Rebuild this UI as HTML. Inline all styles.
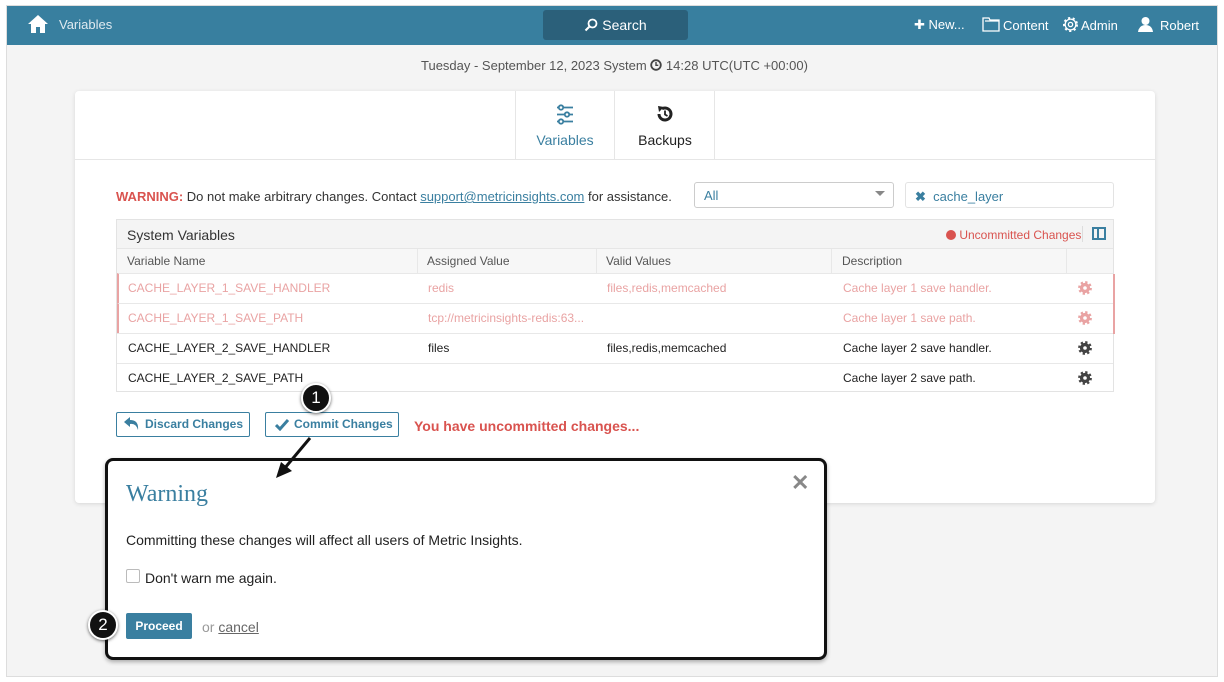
<!DOCTYPE html>
<html><head><meta charset="utf-8"><style>
*{box-sizing:border-box;margin:0;padding:0}
body{width:1224px;height:682px;background:#fff;font-family:"Liberation Sans",sans-serif;position:relative;overflow:hidden}
.frame{position:absolute;left:6px;top:5px;width:1212px;height:672px;background:#f4f4f4;border:1px solid #ddd}
.hdr{position:absolute;left:7px;top:6px;width:1210px;height:39px;background:#387f9f;color:#fff;font-size:13px}
.hdr span,.hdr div{position:absolute}
.search{left:536px;top:4px;width:145px;height:30px;background:#2b607a;border-radius:3px;text-align:center;line-height:30px;font-size:14px}
.a{position:absolute}
.card{position:absolute;left:75px;top:91px;width:1080px;height:412px;background:#fff;border-radius:4px;box-shadow:0 1px 4px rgba(0,0,0,.12)}
.tbl{position:absolute;left:116px;top:219px;width:998px;border:1px solid #e3e3e3;font-size:12px}
.row{position:absolute;left:0;width:996px;height:30px;border-top:1px solid #e8e8e8;line-height:29px}
.row span{position:absolute;white-space:nowrap}
.row svg{position:absolute;left:959px;top:7px}
.pink{color:#e9a3a3}
.btn{position:absolute;top:412px;height:25px;border:1px solid #3a7fa0;border-radius:2px;background:#fff;color:#3a7fa0;font-weight:bold;font-size:12px;line-height:23px;padding-left:28px}
.circ{position:absolute;width:30px;height:30px;border-radius:50%;background:#111;color:#fff;border:2px solid #fff;box-shadow:0 1px 3px rgba(0,0,0,.6);text-align:center;line-height:26px;font-size:17px}
</style></head><body>
<svg width="0" height="0" style="position:absolute"><defs><g id="gear"><circle cx="7" cy="7" r="4.6"/><circle cx="7" cy="7" r="5.6" fill="none" stroke-width="2.6" stroke-dasharray="2.2 2.2"/></g></defs></svg>
<div class="frame"></div>
<div class="hdr">
 <svg class="a" style="left:20px;top:8px" width="22" height="20" viewBox="0 0 22 20"><path d="M11 1 L1 10 L4 10 L4 19 L9 19 L9 13 L13 13 L13 19 L18 19 L18 10 L21 10 Z" fill="#fff"/></svg>
 <span style="left:52px;top:11px;color:#dfeaf0">Variables</span>
 <div class="search"><svg style="vertical-align:-2px" width="14" height="14" viewBox="0 0 14 14"><circle cx="8.5" cy="5.5" r="4" fill="none" stroke="#fff" stroke-width="1.8"/><path d="M5.5 8.5 L1.5 12.5" stroke="#fff" stroke-width="2"/></svg> Search</div>
 <span style="left:907px;top:11px">✚ New...</span>
 <svg class="a" style="left:975px;top:11px" width="18" height="15" viewBox="0 0 18 15"><path d="M1 1h6l1 2h9v11H1z M3 4h14" fill="none" stroke="#fff" stroke-width="1.3"/></svg>
 <span style="left:996px;top:12px">Content</span>
 <svg class="a" style="left:1056px;top:11px" width="15" height="15" viewBox="0 0 14 14"><circle cx="7" cy="7" r="5" fill="none" stroke="#fff" stroke-width="1.2"/><circle cx="7" cy="7" r="6" fill="none" stroke="#fff" stroke-width="2" stroke-dasharray="2 2.3"/><circle cx="7" cy="7" r="2" fill="none" stroke="#fff" stroke-width="1.2"/></svg>
 <span style="left:1074px;top:12px">Admin</span>
 <svg class="a" style="left:1131px;top:10px" width="15" height="16" viewBox="0 0 15 16"><circle cx="7.5" cy="5" r="4" fill="#fff"/><path d="M0 16 Q1 9 7.5 9 Q14 9 15 16Z" fill="#fff"/></svg>
 <span style="left:1153px;top:12px">Robert</span>
</div>
<div class="a" style="left:421px;top:58px;font-size:13px;color:#555">Tuesday - September 12, 2023 System <svg width="12" height="12" viewBox="0 0 12 12" style="vertical-align:-1px"><circle cx="6" cy="6" r="4.8" fill="none" stroke="#444" stroke-width="1.8"/><path d="M6 3V6.3H8.3" fill="none" stroke="#444" stroke-width="1.4"/></svg> 14:28 UTC(UTC +00:00)</div>
<div class="card">
 <div class="a" style="left:0;top:68px;width:1080px;height:1px;background:#e6e6e6"></div>
 <div class="a" style="left:440px;top:0;width:1px;height:68px;background:#e6e6e6"></div>
 <div class="a" style="left:539px;top:0;width:1px;height:68px;background:#e6e6e6"></div>
 <div class="a" style="left:639px;top:0;width:1px;height:68px;background:#e6e6e6"></div>
 <svg class="a" style="left:481px;top:13px" width="18" height="22" viewBox="0 0 18 22" fill="none" stroke="#3a7fa0" stroke-width="1.8"><circle cx="5" cy="3.5" r="2.2"/><path d="M8 3.5h9M1 3.5h1.5"/><circle cx="11" cy="10.5" r="2.2"/><path d="M1 10.5h7.5M13.5 10.5H17"/><circle cx="5" cy="17.5" r="2.2"/><path d="M8 17.5h9M1 17.5h1.5"/></svg>
 <div class="a" style="left:440px;top:41px;width:100px;text-align:center;font-size:14px;color:#3a7fa0">Variables</div>
 <svg class="a" style="left:581px;top:14px" width="18" height="18" viewBox="0 0 18 18"><path d="M3 9 A6 6 0 1 0 6 3.8" fill="none" stroke="#222" stroke-width="3"/><path d="M2 1 L8 2 L3 7Z" fill="#222"/><path d="M9 5.5V9.5L11.5 11" fill="none" stroke="#222" stroke-width="1.8"/></svg>
 <div class="a" style="left:540px;top:41px;width:100px;text-align:center;font-size:14px;color:#222">Backups</div>
</div>
<div class="a" style="left:116px;top:189px;font-size:13px;color:#333"><b style="color:#d9534f">WARNING:</b> Do not make arbitrary changes. Contact <u style="color:#3a7fa0">support@metricinsights.com</u> for assistance.</div>
<div class="a" style="left:694px;top:182px;width:200px;height:26px;border:1px solid #ccc;border-radius:3px;background:#fff;font-size:13px;color:#3a7fa0;padding:5px 9px">All<span style="position:absolute;right:8px;top:8px;width:0;height:0;border-left:5px solid transparent;border-right:5px solid transparent;border-top:5px solid #888"></span></div>
<div class="a" style="left:905px;top:182px;width:209px;height:26px;border:1px solid #e3e3e3;border-radius:3px;background:#fff;font-size:13px;color:#3a7fa0;padding:6px 9px"><b>✖</b>&nbsp; cache_layer</div>
<div class="tbl" style="height:173px">
 <div class="a" style="left:0;top:0;width:996px;height:28px;background:#f4f4f4;font-size:14px;color:#333;padding:7px 10px">System Variables</div>
 <div class="a" style="left:829px;top:8px;font-size:12px;color:#d9534f"><span style="display:inline-block;width:10px;height:10px;border-radius:50%;background:#d9534f;vertical-align:-1px"></span> Uncommitted Changes</div>
 <div class="a" style="left:965px;top:6px;width:1px;height:16px;background:#ddd"></div>
 <div class="a" style="left:975px;top:7px;width:14px;height:13px;border:2px solid #3a7fa0"><div style="margin-left:3px;width:2px;height:9px;background:#3a7fa0"></div></div>
 <div class="a" style="left:0;top:28px;width:996px;height:25px;background:#f7f7f7;border-top:1px solid #e6e6e6;font-size:12px;color:#555;line-height:24px">
  <span class="a" style="left:10px">Variable Name</span><span class="a" style="left:310px">Assigned Value</span><span class="a" style="left:489px">Valid Values</span><span class="a" style="left:725px">Description</span>
  <div class="a" style="left:300px;top:0;width:1px;height:25px;background:#e8e8e8"></div><div class="a" style="left:479px;top:0;width:1px;height:25px;background:#e8e8e8"></div><div class="a" style="left:714px;top:0;width:1px;height:25px;background:#e8e8e8"></div><div class="a" style="left:949px;top:0;width:1px;height:25px;background:#e8e8e8"></div>
 </div>
 <div class="row pink" style="top:53px;border-left:2px solid #e9a3a3"><span style="left:9px">CACHE_LAYER_1_SAVE_HANDLER</span><span style="left:309px">redis</span><span style="left:488px">files,redis,memcached</span><span style="left:724px">Cache layer 1 save handler.</span><svg width="14" height="14" viewBox="0 0 14 14" fill="#e9a3a3" stroke="#e9a3a3"><use href="#gear"/><circle cx="7" cy="7" r="1.8" fill="#fff" stroke="none"/></svg><div class="a" style="left:994px;top:0;width:2px;height:60px;background:#e9a3a3"></div></div>
 <div class="row pink" style="top:83px;border-left:2px solid #e9a3a3"><span style="left:9px">CACHE_LAYER_1_SAVE_PATH</span><span style="left:309px">tcp://metricinsights-redis:63...</span><span style="left:724px">Cache layer 1 save path.</span><svg width="14" height="14" viewBox="0 0 14 14" fill="#e9a3a3" stroke="#e9a3a3"><use href="#gear"/><circle cx="7" cy="7" r="1.8" fill="#fff" stroke="none"/></svg></div>
 <div class="row" style="top:113px;color:#222"><span style="left:11px">CACHE_LAYER_2_SAVE_HANDLER</span><span style="left:311px">files</span><span style="left:490px">files,redis,memcached</span><span style="left:726px">Cache layer 2 save handler.</span><svg width="14" height="14" viewBox="0 0 14 14" fill="#444" stroke="#444" style="left:961px"><use href="#gear"/><circle cx="7" cy="7" r="1.8" fill="#fff" stroke="none"/></svg></div>
 <div class="row" style="top:143px;color:#222"><span style="left:11px">CACHE_LAYER_2_SAVE_PATH</span><span style="left:726px">Cache layer 2 save path.</span><svg width="14" height="14" viewBox="0 0 14 14" fill="#444" stroke="#444" style="left:961px"><use href="#gear"/><circle cx="7" cy="7" r="1.8" fill="#fff" stroke="none"/></svg></div>
</div>
<div class="btn" style="left:116px;width:134px"><svg class="a" style="left:7px;top:4px" width="16" height="14" viewBox="0 0 16 14"><path d="M6 0 L0 5 L6 10 V7 Q12 6 14 13 Q15 3 6 3Z" fill="#3a7fa0"/></svg>Discard Changes</div>
<div class="btn" style="left:265px;width:134px"><svg class="a" style="left:9px;top:6px" width="14" height="12" viewBox="0 0 14 12"><path d="M1 6 L5 10 L13 1" fill="none" stroke="#3a7fa0" stroke-width="3"/></svg>Commit Changes</div>
<div class="a" style="left:414px;top:418px;font-size:14px;font-weight:bold;color:#d9534f">You have uncommitted changes...</div>
<div class="a" style="left:105px;top:458px;width:722px;height:202px;background:#fff;border:3px solid #111;border-radius:8px;box-shadow:0 2px 4px rgba(0,0,0,.3)">
 <div class="a" style="left:18px;top:20px;font-family:'Liberation Serif',serif;font-size:24px;color:#3a7fa0">Warning</div>
 <div class="a" style="left:683px;top:9px;font-size:22px;color:#888;font-weight:bold">✕</div>
 <div class="a" style="left:18px;top:71px;font-size:14px;color:#222">Committing these changes will affect all users of Metric Insights.</div>
 <div class="a" style="left:18px;top:108px;width:14px;height:14px;border:1px solid #bbb;border-radius:2px"></div>
 <div class="a" style="left:37px;top:109px;font-size:14px;color:#222">Don't warn me again.</div>
 <div class="a" style="left:18px;top:152px;width:66px;height:26px;background:#3a7fa0;border-radius:2px;color:#fff;font-weight:bold;font-size:12px;text-align:center;line-height:26px">Proceed</div>
 <div class="a" style="left:94px;top:158px;font-size:14px;color:#999">or <u style="color:#666">cancel</u></div>
</div>
<svg class="a" style="left:270px;top:435px" width="50" height="50" viewBox="0 0 50 50"><path d="M40 3 L14 34" stroke="#111" stroke-width="3"/><path d="M6 43 L11 27 L22 36Z" fill="#111"/></svg>
<div class="circ" style="left:301px;top:383px">1</div>
<div class="circ" style="left:88px;top:610px">2</div>
</body></html>
